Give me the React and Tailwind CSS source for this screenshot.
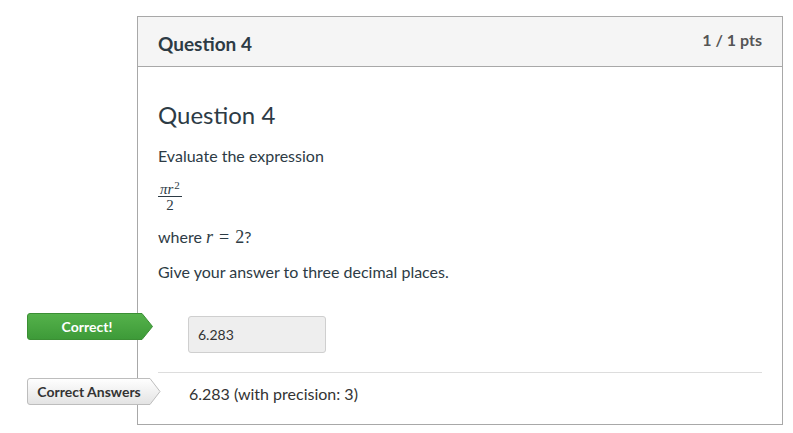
export default function App() {
  return (
    <div className="relative w-[793px] h-[433px] bg-white" style={{ fontFamily: "Lato, 'Open Sans', sans-serif" }}>
      <div className="ml-[137px] pt-[16px]">
        <div className="w-[646px] h-[409px] border border-[#a8a8a8] flex flex-col">
          <div className="h-[50px] shrink-0 bg-[#f5f5f5] border-b border-[#a8a8a8] flex justify-between pl-[20px] pr-[20px]">
            <div className="flex items-center pt-[5px] text-[19px] font-bold text-[#2d3b45]">Question 4</div>
            <div className="pt-[11px] text-[16px] font-bold text-[#555]">1 / 1 pts</div>
          </div>
          <div className="px-[20px] pt-[35px] text-[#2d3b45]">
            <h2 className="text-[24px] leading-[26px] font-normal">Question 4</h2>
            <p className="mt-[18px] text-[16px] leading-[20px]">Evaluate the expression</p>
            <div className="mt-[13px] inline-flex flex-col items-center" style={{ fontFamily: "'Liberation Serif', serif" }}>
              <div className="h-[17px] text-[15px] leading-[20px] italic px-[2px]">
                πr<sup className="not-italic text-[11px] ml-[1px]">2</sup>
              </div>
              <div className="w-full h-px bg-[#2d3b45]" />
              <div className="h-[16px] text-[15px] leading-[17px]">2</div>
            </div>
            <p className="mt-[14px] text-[16px] leading-[20px]">
              where{" "}
              <span className="italic text-[18px]" style={{ fontFamily: "'Liberation Serif', serif" }}>r</span>
              <span className="text-[18px] mx-[6px]" style={{ fontFamily: "'Liberation Serif', serif" }}>=</span>
              <span className="text-[18px]" style={{ fontFamily: "'Liberation Serif', serif" }}>2</span>?
            </p>
            <p className="mt-[15px] text-[16px] leading-[20px]">Give your answer to three decimal places.</p>
            <div className="mt-[34px] ml-[30px] w-[138px] h-[37px] bg-[#eeeeee] border border-[#cfcfcf] rounded-[3px] flex items-center pl-[9px] text-[14px] text-[#333]">
              6.283
            </div>
            <div className="mt-[19px] border-t border-[#dddddd]" />
            <p className="mt-[11px] ml-[31px] text-[16px] leading-[20px] text-[#333]">6.283 (with precision: 3)</p>
          </div>
        </div>
      </div>

      <div className="absolute left-[27px] top-[313px] w-[126px] h-[27px] flex items-center">
        <svg className="absolute inset-0" width="126" height="27" viewBox="0 0 126 27">
          <defs>
            <linearGradient id="g1" x1="0" y1="0" x2="0" y2="1">
              <stop offset="0" stopColor="#55b24b" />
              <stop offset="1" stopColor="#3d9a38" />
            </linearGradient>
          </defs>
          <path d="M3 0.5 H115 L125.5 13.5 L115 26.5 H3 Q0.5 26.5 0.5 24 V3 Q0.5 0.5 3 0.5 Z" fill="url(#g1)" stroke="#3b8f34" />
        </svg>
        <span className="relative w-[120px] text-center text-[14px] font-bold text-white">Correct!</span>
      </div>

      <div className="absolute left-[27px] top-[378px] w-[134px] h-[27px] flex items-center">
        <svg className="absolute inset-0" width="134" height="27" viewBox="0 0 134 27">
          <defs>
            <linearGradient id="g2" x1="0" y1="0" x2="0" y2="1">
              <stop offset="0" stopColor="#ffffff" />
              <stop offset="1" stopColor="#e3e3e3" />
            </linearGradient>
          </defs>
          <path d="M3 0.5 H123 L133 13.5 L123 26.5 H3 Q0.5 26.5 0.5 24 V3 Q0.5 0.5 3 0.5 Z" fill="url(#g2)" stroke="#bdbdbd" />
        </svg>
        <span className="relative w-[124px] text-center text-[14px] font-bold text-[#333]">Correct Answers</span>
      </div>
    </div>
  );
}
